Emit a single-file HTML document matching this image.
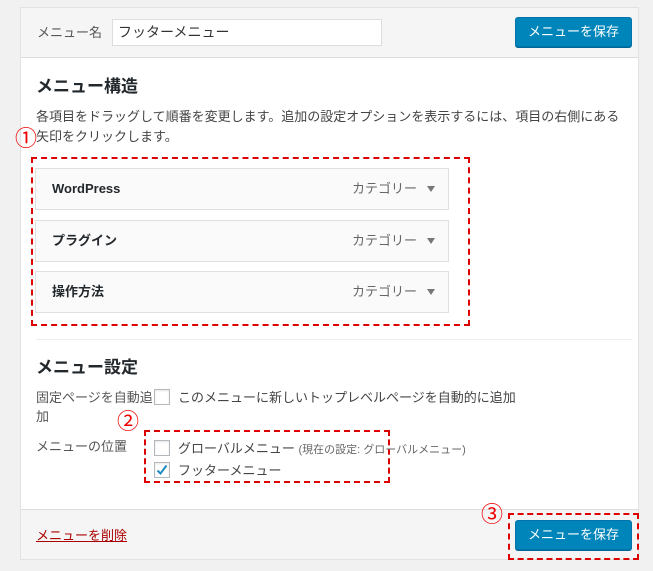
<!DOCTYPE html>
<html><head><meta charset="utf-8"><style>
*{margin:0;padding:0;box-sizing:border-box}
body{width:653px;height:571px;background:#f1f1f1;position:relative;overflow:hidden;font-family:"Liberation Sans","Noto Sans CJK JP",sans-serif;color:#444;font-size:13px;line-height:18px}
.a{position:absolute;white-space:nowrap}
.panel{position:absolute;left:20px;top:7px;width:619px;height:553px;background:#fff;border:1px solid #e2e2e2}
.head{position:absolute;left:20px;top:7px;width:619px;height:51px;background:#f5f5f5;border:1px solid #e2e2e2;border-bottom:1px solid #ddd}
.foot{position:absolute;left:20px;top:509px;width:619px;height:51px;background:#f5f5f5;border:1px solid #e2e2e2;border-top:1px solid #ddd}
.btn{position:absolute;background:#0085ba;border:1px solid #0073aa;border-radius:3px;color:#fff;font-size:13px;text-align:center;line-height:28px;box-shadow:0 1px 0 #006799}
.item{position:absolute;left:35px;width:414px;height:42px;background:#fafafa;border:1px solid #dfdfdf}
.item b{position:absolute;left:16px;top:0;line-height:40px;font-size:13px;color:#23282d;font-weight:bold}
.item span{position:absolute;left:316px;top:0;line-height:40px;color:#666;font-size:13px}
.item i{position:absolute;left:391px;top:17px;width:0;height:0;border-left:4px solid transparent;border-right:4px solid transparent;border-top:6px solid #777}
.dash{position:absolute;border:2px dashed #d00}
.cb{position:absolute;width:16px;height:16px;border:1px solid #b4b9be;background:#fff;box-shadow:inset 0 1px 2px rgba(0,0,0,.1)}
.num{position:absolute;color:#e00;font-size:22px;line-height:22px}
</style></head><body>
<div class="panel"></div>
<div class="head"></div>
<div class="foot"></div>
<div class="a" style="left:37px;top:24px;color:#555">メニュー名</div>
<div class="a" style="left:112px;top:19px;width:270px;height:27px;border:1px solid #ddd;background:#fff;padding:3px 5px;font-size:14px;color:#333">フッターメニュー</div>
<div class="btn" style="left:515px;top:17px;width:117px;height:30px">メニューを保存</div>
<div class="a" style="left:36px;top:76px;font-size:17px;line-height:22px;font-weight:bold;color:#23282d">メニュー構造</div>
<div class="a" style="left:36px;top:107px;line-height:20px;white-space:normal;width:595px">各項目をドラッグして順番を変更します。追加の設定オプションを表示するには、項目の右側にある矢印をクリックします。</div>
<div class="num" style="left:15px;top:128px">①</div>
<div class="dash" style="left:31px;top:157px;width:439px;height:169px"></div>
<div class="item" style="top:168px"><b>WordPress</b><span>カテゴリー</span><i></i></div>
<div class="item" style="top:220px"><b>プラグイン</b><span>カテゴリー</span><i></i></div>
<div class="item" style="top:271px"><b>操作方法</b><span>カテゴリー</span><i></i></div>
<div class="a" style="left:36px;top:339px;width:596px;height:1px;background:#eee"></div>
<div class="a" style="left:36px;top:357px;font-size:17px;line-height:22px;font-weight:bold;color:#23282d">メニュー設定</div>
<div class="a" style="left:36px;top:389px;color:#555">固定ページを自動追</div>
<div class="a" style="left:36px;top:408px;color:#555">加</div>
<div class="cb" style="left:154px;top:389px"></div>
<div class="a" style="left:178px;top:389px">このメニューに新しいトップレベルページを自動的に追加</div>
<div class="num" style="left:117px;top:411px">②</div>
<div class="dash" style="left:144px;top:430px;width:246px;height:53px"></div>
<div class="a" style="left:36px;top:438px;color:#555">メニューの位置</div>
<div class="cb" style="left:154px;top:440px"></div>
<div class="a" style="left:178px;top:440px">グローバルメニュー <span style="font-size:11px;color:#666">(現在の設定: グローバルメニュー)</span></div>
<div class="cb" style="left:154px;top:462px"><svg width="16" height="16" viewBox="0 0 16 16" style="position:absolute;left:-1px;top:-1px"><path d="M3.5 8.5 L6.5 11.5 L12.5 3.5" stroke="#1e8cbe" stroke-width="2" fill="none"/></svg></div>
<div class="a" style="left:178px;top:462px">フッターメニュー</div>
<div class="a" style="left:36px;top:527px;color:#a00;text-decoration:underline">メニューを削除</div>
<div class="num" style="left:481px;top:504px">③</div>
<div class="dash" style="left:508px;top:513px;width:131px;height:47px"></div>
<div class="btn" style="left:515px;top:520px;width:117px;height:30px">メニューを保存</div>
</body></html>
